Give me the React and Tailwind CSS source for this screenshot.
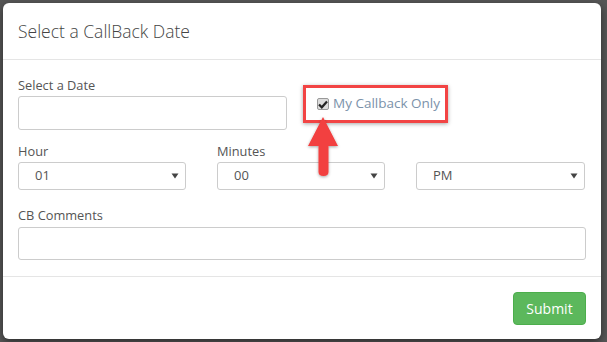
import React from 'react';

const font = { fontFamily: '"Open Sans", "Liberation Sans", sans-serif' };

function Caret() {
  return (
    <svg width="8" height="6" viewBox="0 0 8 6" className="shrink-0">
      <path d="M0.5 0.5 L7.5 0.5 L4 5.5 Z" fill="#444" />
    </svg>
  );
}

function Select({ value, className = "" }) {
  return (
    <div className={`h-[28px] w-[168px] border border-[#ccc] rounded-[3px] bg-white flex items-center justify-between pl-[16px] pr-[6px] text-[13px] text-[#555] ${className}`}>
      <span>{value}</span>
      <Caret />
    </div>
  );
}

function Arrow() {
  return (
    <svg width="40" height="66" viewBox="0 0 40 66" className="absolute left-[303px] top-[114px] pointer-events-none">
      <defs>
        <filter id="sh" x="-30%" y="-30%" width="160%" height="160%">
          <feDropShadow dx="0" dy="1" stdDeviation="1.5" floodColor="#000" floodOpacity="0.35" />
        </filter>
      </defs>
      <g filter="url(#sh)" fill="#f23f3f">
        <path d="M20 3 L35 32 L25.5 32 L25.5 58 Q25.5 62 20.5 62 Q15.5 62 15.5 58 L15.5 32 L5 32 Z" />
      </g>
    </svg>
  );
}

export default function App() {
  return (
    <div className="w-[607px] h-[342px] overflow-hidden bg-[#575757] relative" style={font}>
      <div className="ml-[3px] mt-[3px] w-[598px] h-[336px] bg-white rounded-[6px] shadow-[0_3px_9px_rgba(0,0,0,0.5)] flex flex-col">
        <div className="h-[57px] border-b border-[#e5e5e5] px-[15px] flex items-center">
          <h4 className="text-[17.5px] font-light text-[#444] leading-none pt-[1px]">Select a CallBack Date</h4>
        </div>

        <div className="px-[15px] pt-[15px] flex flex-col">
          <div className="flex">
            <div className="w-[269px] flex flex-col">
              <label className="text-[12.8px] text-[#555] leading-[20px] h-[20px]">Select a Date</label>
              <div className="mt-[1px] h-[34px] border border-[#ccc] rounded-[3px]" />
            </div>
            <div className="ml-[16px] mt-[10px] h-[38px] w-[145px] border-[3px] border-[#f24444] shadow-[0_1px_4px_rgba(0,0,0,0.35)] flex items-center pl-[11px]">
              <span className="w-[12px] h-[12px] rounded-[2px] border border-[#999] bg-[#dcdcdc] flex items-center justify-center">
                <svg width="10" height="9" viewBox="0 0 10 9">
                  <path d="M1 4.5 L3.8 7.3 L9 1.5" stroke="#222" strokeWidth="2.2" fill="none" />
                </svg>
              </span>
              <span className="ml-[4px] text-[13.5px] text-[#7b92aa] leading-none">My Callback Only</span>
            </div>
          </div>

          <div className="flex mt-[11px]">
            <div className="w-[199px] flex flex-col">
              <label className="text-[12.8px] text-[#555] leading-[20px] h-[20px]">Hour</label>
              <Select value="01" className="mt-[1px]" />
            </div>
            <div className="w-[199px] flex flex-col">
              <label className="text-[12.8px] text-[#555] leading-[20px] h-[20px]">Minutes</label>
              <Select value="00" className="mt-[1px]" />
            </div>
            <div className="w-[169px] flex flex-col">
              <div className="h-[20px]" />
              <Select value="PM" className="mt-[1px] w-[169px]" />
            </div>
          </div>

          <div className="flex flex-col mt-[15px]">
            <label className="text-[12.8px] text-[#555] leading-[20px] h-[20px]">CB Comments</label>
            <div className="mt-[2px] h-[33px] border border-[#ccc] rounded-[3px]" />
          </div>
        </div>

        <div className="mt-[16px] border-t border-[#e5e5e5] px-[15px] pt-[15px] flex justify-end">
          <button className="w-[73px] h-[33px] bg-[#5cb85c] border border-[#4cae4c] rounded-[4px] text-white text-[14px]">Submit</button>
        </div>
      </div>
      <Arrow />
    </div>
  );
}
